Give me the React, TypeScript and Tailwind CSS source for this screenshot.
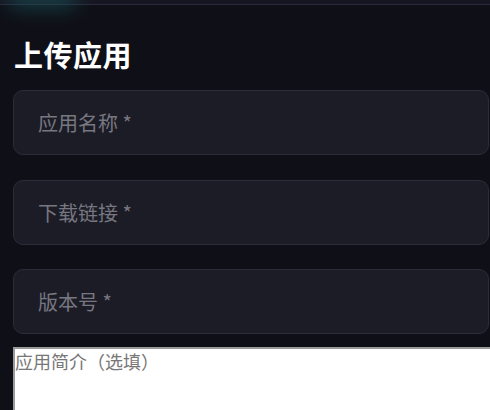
const fields = ["应用名称 *", "下载链接 *", "版本号 *"];

export default function App() {
  return (
    <div className="min-h-[410px] w-[490px] overflow-hidden bg-[#0f0f17] font-['Noto_Sans_CJK_SC','Noto_Sans',sans-serif]">
      <div className="relative h-[5px] border-b border-[#2a2a3a] bg-[#161622]">
        <div className="absolute -top-[14px] left-[8px] h-[22px] w-[70px] rounded-full bg-[#1b5c60] opacity-60 blur-[10px]" />
      </div>
      <div className="pl-[13px] pt-[29px]">
        <h1 className="pl-[1px] text-[29px] font-bold leading-[40px] tracking-[0.5px] text-white">上传应用</h1>
        <div className="mt-[16px] flex flex-col gap-[24.5px]">
          {fields.map((label) => (
            <input
              key={label}
              placeholder={label}
              className="h-[65px] w-[476px] rounded-[10px] border border-[#2c2c3a] bg-[#1c1c27] px-[24px] text-[20px] text-white outline-none placeholder:text-[#777780]"
            />
          ))}
        </div>
        <textarea
          placeholder="应用简介（选填）"
          className="mt-[13px] block h-[80px] w-[480px] resize-none border-2 border-[#9a9a9a] bg-white p-0 text-[18px] leading-[24px] placeholder:text-[#777777]"
        />
      </div>
    </div>
  );
}
